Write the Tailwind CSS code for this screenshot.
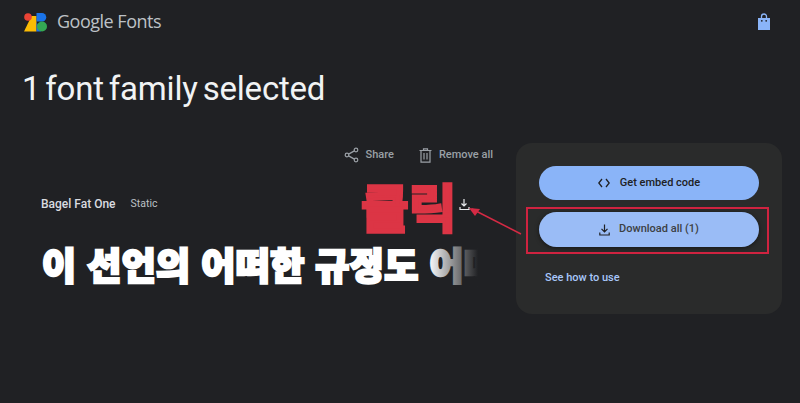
<!DOCTYPE html>
<html lang="ko">
  <head>
    <meta charset="UTF-8" />
    <title>Google Fonts</title>
    <script src="https://cdn.jsdelivr.net/npm/@tailwindcss/browser@4"></script>
  </head>
  <body class="bg-[#202124] w-[800px] h-[403px] overflow-hidden relative font-['Roboto','Noto_Sans_CJK_KR',sans-serif]">
    <header class="h-[44px] pl-6 pr-[28px] flex items-center justify-between">
      <div class="flex items-center">
        <svg width="23" height="19" viewBox="0 0 23 19">
          <path d="M7.5 3 L12.5 3 L12.5 18.5 L0 18.5 Z" fill="#fbbc04" />
          <circle cx="4" cy="4" r="3.8" fill="#ea4335" />
          <path d="M12.5 0 H18 A4.2 4.2 0 0 1 18 8.5 H12.5 Z" fill="#1a73e8" />
          <path d="M12.5 9 V18.5 H17 Z" fill="#1a73e8" />
          <circle cx="18" cy="13.5" r="5" fill="#34a853" />
        </svg>
        <span class="ml-[10px] mb-[2px] text-[18px] leading-none text-[#bdc1c6] font-['Open_Sans'] tracking-[-0.5px]">Google Fonts</span>
      </div>
      <svg class="mb-[1px]" width="16" height="18" viewBox="0 0 16 18">
        <path d="M5.5 5 V3.5 A2.5 2.5 0 0 1 10.5 3.5 V5" fill="none" stroke="#8ab4f8" stroke-width="1.3" />
        <path d="M2 5 H14 V17 H2 Z" fill="#8ab4f8" />
        <circle cx="5.8" cy="7.8" r="0.9" fill="#202124" />
        <circle cx="10.2" cy="7.8" r="0.9" fill="#202124" />
      </svg>
    </header>

    <h1 class="pl-[22px] mt-[25px] text-[33px] leading-[40px] text-[#f1f3f4] font-normal [word-spacing:-3px] tracking-[-0.2px]">1 font family selected</h1>

    <main class="flex mt-[34px] pl-[41px] pr-[18px] justify-between">
      <section class="w-[437px]">
        <div class="h-[24px] flex items-center justify-end gap-[25px] text-[11px] text-[#9aa0a6] font-medium">
          <span class="flex items-center gap-[7px]">
            <svg width="15" height="16" viewBox="0 0 15 16" fill="none" stroke="#9aa0a6" stroke-width="1.2">
              <circle cx="12" cy="3" r="1.8" /><circle cx="3" cy="8" r="1.8" /><circle cx="12" cy="13" r="1.8" />
              <path d="M4.6 7.1 L10.4 3.9 M4.6 8.9 L10.4 12.1" />
            </svg>
            Share
          </span>
          <span class="flex items-center gap-[7px] mr-[-15px]">
            <svg width="13" height="15" viewBox="0 0 13 15" fill="none" stroke="#9aa0a6" stroke-width="1.2">
              <path d="M0.5 2.5 H12.5 M4.5 2.5 V0.8 H8.5 V2.5 M2 2.5 V14.2 H11 V2.5 M5 5 V11.5 M8 5 V11.5" />
            </svg>
            Remove all
          </span>
        </div>
        <div class="mt-[27px] flex items-center h-[20px] text-[12px]">
          <span class="text-[#dadce0] font-medium">Bagel Fat One</span>
          <span class="ml-[15px] text-[10.5px] text-[#bdc1c6]">Static</span>
        </div>
        <div class="relative mt-[27px] h-[46px] overflow-hidden">
          <p class="whitespace-nowrap text-[37px] leading-[46px] font-black text-white font-['Noto_Sans_CJK_KR',sans-serif] [-webkit-text-stroke:2.5px_white] tracking-[0.4px] pl-[1px]">이 선언의 어떠한 규정도 어떠</p>
          <div class="absolute inset-y-0 right-0 w-[50px] bg-gradient-to-r from-[#202124]/0 to-[#202124]"></div>
        </div>
      </section>

      <aside class="w-[266px] h-[171px] bg-[#2a2b2b] rounded-[16px] pt-[23px] px-[23px]">
        <button class="w-[220px] h-[34px] rounded-full bg-[#8ab4f8] flex items-center justify-center gap-[10px] text-[11px] font-medium text-[#202124]">
          <svg width="12" height="10" viewBox="0 0 12 10" fill="none" stroke="#202124" stroke-width="1.3">
            <path d="M4 1 L0.8 5 L4 9 M8 1 L11.2 5 L8 9" />
          </svg>
          Get embed code
        </button>
        <button class="w-[220px] h-[35px] mt-[12px] rounded-full bg-[#9abcf6] shadow-[0_1px_4px_rgba(0,0,0,0.5)] flex items-center justify-center gap-[9px] text-[11px] font-medium text-[#3c4043]">
          <svg width="11" height="12" viewBox="0 0 11 12" fill="none" stroke="#202124" stroke-width="1.2">
            <path d="M5.5 0.5 V7.5 M2.5 4.8 L5.5 7.8 L8.5 4.8 M0.8 8.5 V11 H10.2 V8.5" />
          </svg>
          Download all (1)
        </button>
        <a class="block mt-[24px] ml-[6px] text-[11px] leading-[14px] font-medium text-[#a8c7fa]">See how to use</a>
      </aside>
    </main>

    <!-- annotations drawn over the screenshot -->
    <svg class="absolute left-[459px] top-[198px]" width="14" height="14" viewBox="0 0 14 14" fill="none" stroke="#e8eaed" stroke-width="1.2">
      <path d="M5 1 V8 M2.5 5.5 L5 8 L7.5 5.5 M1 9 V11.5 H10 V9" />
    </svg>
    <div class="absolute left-[361px] top-[168px] h-[76px] flex items-center text-[52px] leading-none font-bold text-[#dc3545] font-['Noto_Sans_CJK_KR',sans-serif] [-webkit-text-stroke:3px_#dc3545]">클릭</div>
    <svg class="absolute left-0 top-0 pointer-events-none" width="800" height="403" fill="none">
      <path d="M521 234 L472 209" stroke="#d42a44" stroke-width="1.5" />
      <path d="M469 208 L480 209 L475 216 Z" fill="#d42a44" />
      <rect x="527" y="208" width="241" height="45" stroke="#cf2340" stroke-width="2" />
    </svg>
  </body>
</html>
